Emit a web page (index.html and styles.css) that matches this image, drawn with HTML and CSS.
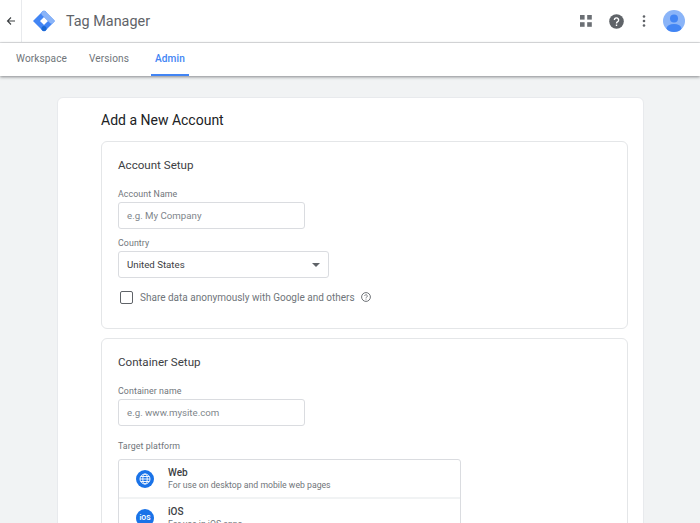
FILE: index.html
```html
<!DOCTYPE html>
<html lang="en">
<head>
<meta charset="utf-8">
<title>Tag Manager</title>
<link rel="stylesheet" href="styles.css">
</head>
<body>
<header class="topbar">
  <div class="back">
    <svg width="10" height="10" viewBox="0 0 10 10"><path d="M9 5H2M5 1.500 1.500 5 5 8.500" fill="none" stroke="#3c4043" stroke-width="1.100"/></svg>
  </div>
  <div class="brand">
    <svg class="logo" width="22" height="22" viewBox="0 0 22 22" fill="none" stroke-linecap="round" stroke-width="5">
      <path d="M11 3.500 18.500 11 11 18.500" stroke="#4285f4"/>
      <path d="M11 3.500 3.500 11 11 18.500" stroke="#4285f4"/>
      <path d="M11 3.500 18.500 11" stroke="#8ab4f8"/>
      <circle cx="11" cy="18.500" r="2.500" fill="#1967d2" stroke="none"/>
    </svg>
    <span class="product">Tag Manager</span>
  </div>
  <div class="actions">
    <svg width="12" height="12" viewBox="0 0 12 12" fill="#6b6f74"><rect width="4.600" height="4.600"/><rect x="7.200" width="4.600" height="4.600"/><rect y="7.200" width="4.600" height="4.600"/><rect x="7.200" y="7.200" width="4.600" height="4.600"/></svg>
    <svg class="help" width="15" height="15" viewBox="0 0 15 15"><circle cx="7.500" cy="7.500" r="7.300" fill="#5f6368"/><path d="M5.400 6a2.100 2.100 0 1 1 3.300 1.700c-.8.500-1.200.9-1.200 1.800" fill="none" stroke="#fff" stroke-width="1.400"/><rect x="6.800" y="10.500" width="1.400" height="1.500" fill="#fff"/></svg>
    <svg class="dots" width="4" height="12" viewBox="0 0 4 12" fill="#5f6368"><circle cx="2" cy="1.500" r="1.300"/><circle cx="2" cy="6" r="1.300"/><circle cx="2" cy="10.500" r="1.300"/></svg>
    <svg class="avatar" width="22" height="22" viewBox="0 0 22 22"><defs><clipPath id="av"><circle cx="11" cy="11" r="11"/></clipPath></defs><circle cx="11" cy="11" r="11" fill="#8ab4f8"/><g clip-path="url(#av)" fill="#4285f4"><circle cx="11" cy="8.500" r="4"/><ellipse cx="11" cy="18.500" rx="7.500" ry="4.500"/></g></svg>
  </div>
</header>
<nav class="tabs">
  <a class="tab">Workspace</a>
  <a class="tab">Versions</a>
  <a class="tab active">Admin</a>
</nav>
<main class="page">
  <section class="card">
    <h1 class="title">Add a New Account</h1>
    <div class="panel">
      <h2 class="panel-title">Account Setup</h2>
      <label class="label label-first">Account Name</label>
      <div class="input">e.g. My Company</div>
      <label class="label label-country">Country</label>
      <div class="select"><span>United States</span><i class="caret"></i></div>
      <div class="check-row">
        <span class="checkbox"></span>
        <span class="check-text">Share data anonymously with Google and others</span>
        <svg class="hint" width="10" height="10" viewBox="0 0 10 10"><circle cx="5" cy="5" r="4.400" fill="none" stroke="#5f6368" stroke-width="0.900"/><path d="M3.700 4a1.300 1.300 0 1 1 2 1.100c-.5.300-.7.500-.7 1" fill="none" stroke="#5f6368" stroke-width="0.800"/><rect x="4.600" y="6.700" width="0.800" height="0.900" fill="#5f6368"/></svg>
      </div>
    </div>
    <div class="panel panel-open">
      <h2 class="panel-title">Container Setup</h2>
      <label class="label label-first">Container name</label>
      <div class="input">e.g. www.mysite.com</div>
      <label class="label label-target">Target platform</label>
      <div class="platforms">
        <div class="platform">
          <svg class="platform-icon" width="18" height="18" viewBox="0 0 18 18"><circle cx="9" cy="9" r="9" fill="#1a73e8"/><g fill="none" stroke="#fff" stroke-width="0.900"><circle cx="9" cy="9" r="5"/><ellipse cx="9" cy="9" rx="2.200" ry="5"/><path d="M4 9h10M4.700 6.500h8.600M4.700 11.500h8.600"/></g></svg>
          <div class="platform-text"><div class="platform-name">Web</div><div class="platform-desc">For use on desktop and mobile web pages</div></div>
        </div>
        <div class="platform">
          <div class="ios-icon">iOS</div>
          <div class="platform-text"><div class="platform-name">iOS</div><div class="platform-desc">For use in iOS apps</div></div>
        </div>
      </div>
    </div>
  </section>
</main>
</body>
</html>
```
FILE: styles.css
```css
* { box-sizing: border-box; }
html, body { margin: 0; height: 523px; overflow: hidden; }
body { font-family: Roboto, "Liberation Sans", sans-serif; background: #f1f3f4; color: #202124; }
.topbar { height: 43px; background: #fff; border-bottom: 1px solid #e3e4e6; display: flex; align-items: center; }
.back { width: 22px; height: 42px; border-right: 1px solid #e8eaed; display: flex; align-items: center; justify-content: center; flex: none; }
.brand { display: flex; align-items: center; padding-left: 11px; flex: 1; }
.product { font-size: 14.400px; margin-left: 11px; color: #5f6368; }
.actions { display: flex; align-items: center; padding-right: 15px; }
.help { margin-left: 17px; }
.dots { margin-left: 18px; }
.avatar { margin-left: 17px; }
.tabs { height: 33px; background: #fff; display: flex; box-shadow: 0 1px 3px rgba(60,64,67,.6); position: relative; padding-left: 16px; }
.tab { font-size: 10.100px; color: #70757a; display: flex; align-items: center; margin-right: 22px; letter-spacing: .1px; border-bottom: 2px solid transparent; }
.tab.active { color: #4285f4; font-weight: 500; border-bottom-color: #4285f4; padding: 0 4px; }
.page { padding: 21px 56px 0 57px; }
.card { background: #fff; border: 1px solid #e8eaed; border-radius: 6px; padding: 13px 15px 0 43px; height: 600px; }
.title { margin: 0 0 11px; font-size: 14px; font-weight: 400; line-height: 19px; }
.panel { border: 1px solid #e4e6e8; border-radius: 6px; padding: 15px 16px; height: 188px; margin-bottom: 9px; }
.panel-open { height: 300px; }
.panel-title { margin: 0; font-size: 11.600px; font-weight: 400; line-height: 16px; color: #3c4043; }
.label { display: block; font-size: 8.800px; line-height: 11px; color: #70757a; letter-spacing: .1px; }
.label-first { margin-top: 16px; }
.label-country { margin-top: 9px; }
.label-target { margin-top: 15px; }
.input, .select { border: 1px solid #dadce0; border-radius: 3px; height: 27px; margin-top: 2px; display: flex; align-items: center; font-size: 9.700px; padding: 0 8px; }
.input { width: 186.500px; color: #80868b; }
.select { width: 210.500px; color: #3c4043; justify-content: space-between; }
.caret { width: 0; height: 0; border: 4px solid transparent; border-top: 4px solid #5f6368; border-bottom: 0; }
.check-row { display: flex; align-items: center; margin-top: 12px; margin-left: 2px; height: 14px; }
.checkbox { width: 13px; height: 13px; border: 1.500px solid #5f6368; border-radius: 2px; flex: none; }
.check-text { font-size: 10px; color: #70757a; margin-left: 7px; }
.hint { margin-left: 6px; }
.platforms { width: 343px; margin-top: 7px; border: 1px solid #dadce0; border-radius: 3px; }
.platform { display: flex; align-items: center; height: 39px; border-bottom: 2px solid #f1f3f4; padding-left: 17px; }
.platform-text { margin-left: 14px; }
.platform-name { font-size: 10px; font-weight: 500; line-height: 12px; color: #3c4043; }
.platform-desc { font-size: 8.700px; line-height: 12px; color: #70757a; }
.ios-icon { width: 18px; height: 18px; border-radius: 50%; background: #1a73e8; color: #fff; font-size: 7px; font-weight: 700; display: flex; align-items: center; justify-content: center; flex: none; }
```
